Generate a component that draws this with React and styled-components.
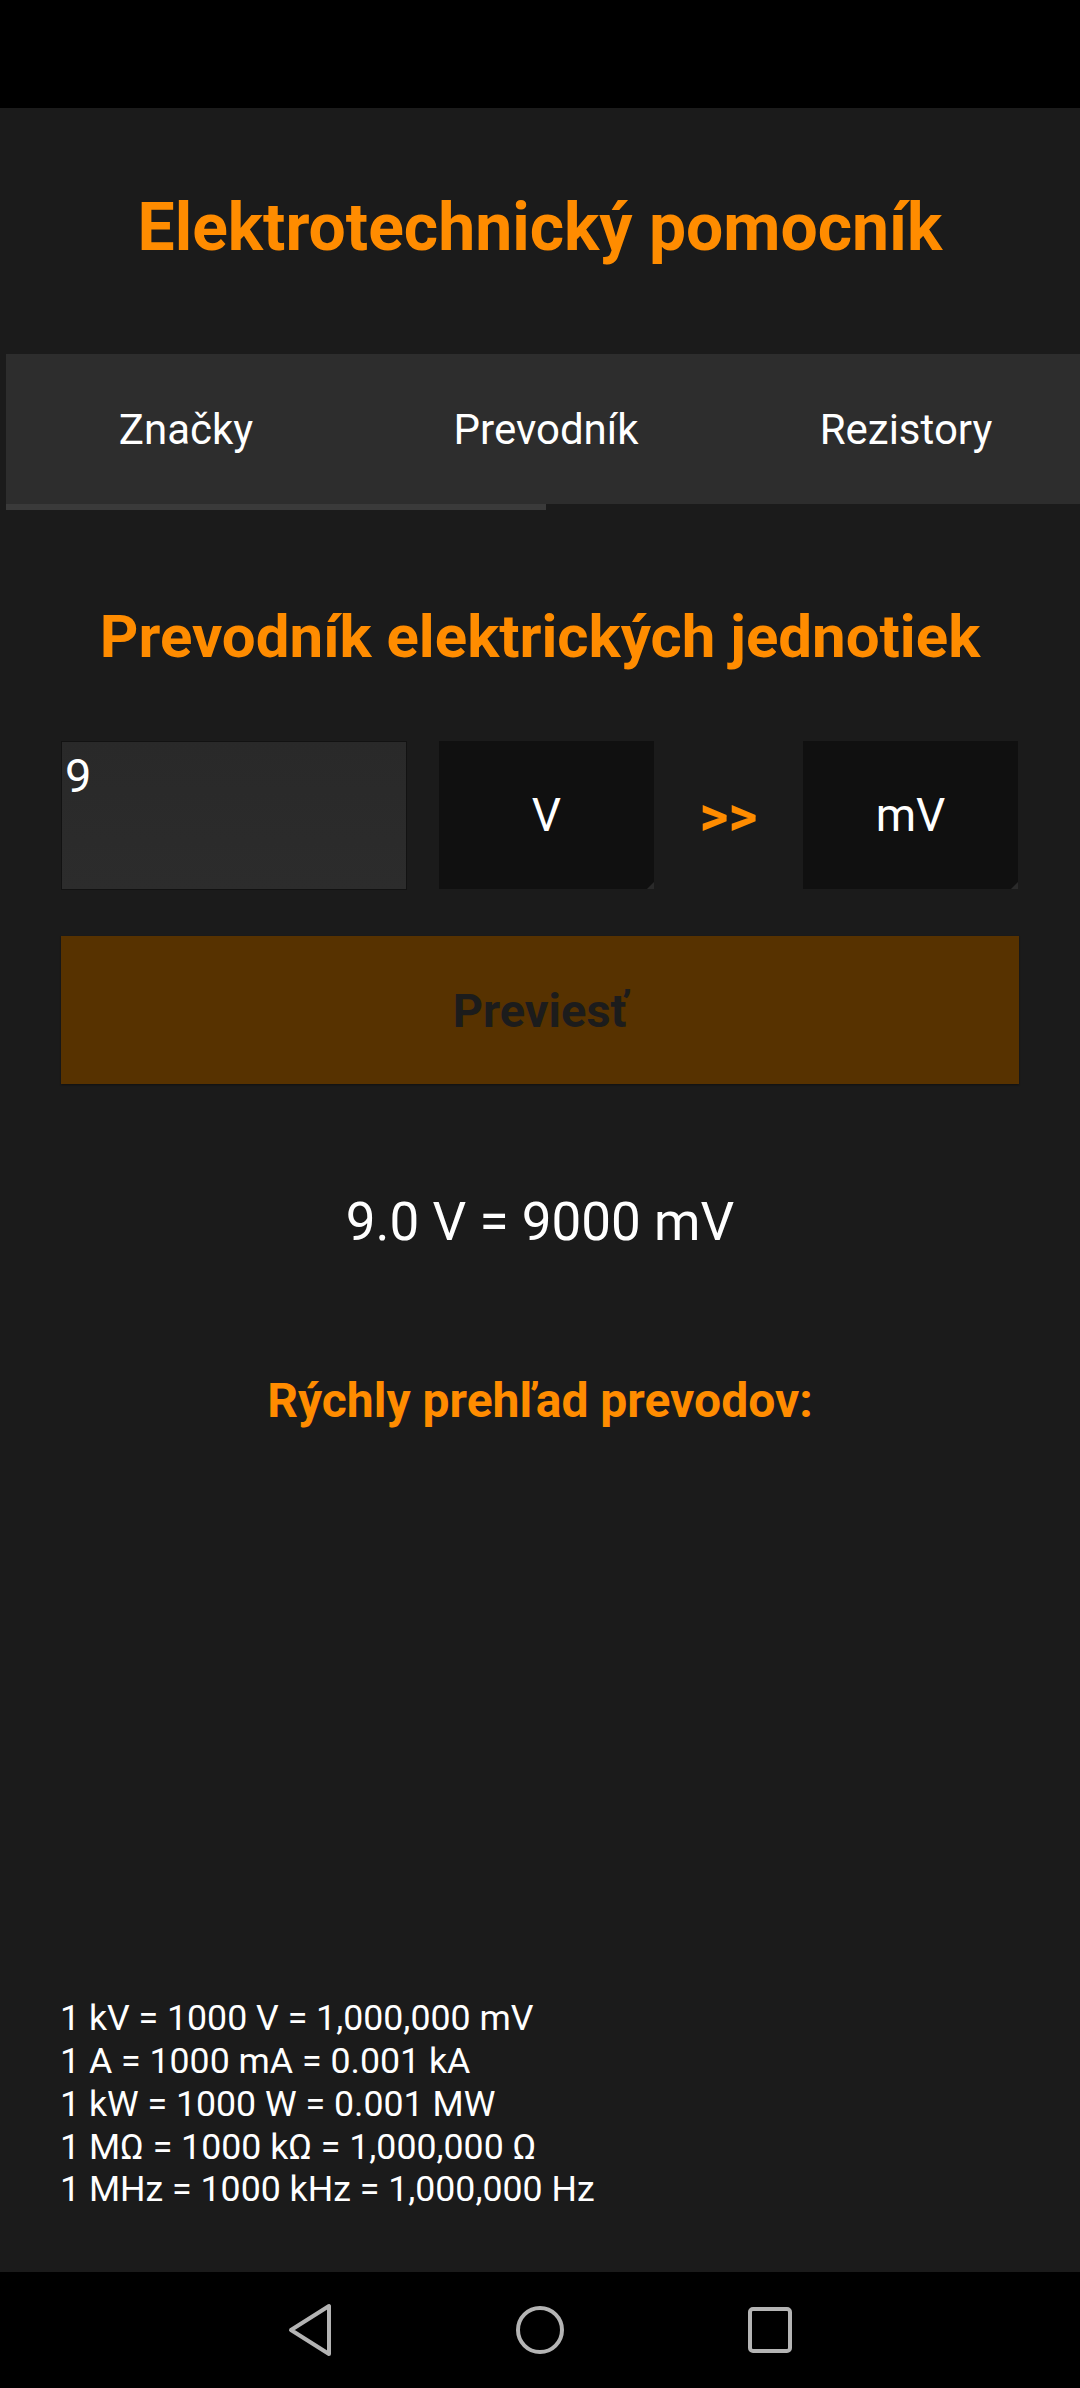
import React from "react";
import styled, { createGlobalStyle } from "styled-components";

const GlobalStyle = createGlobalStyle`
  html, body {
    margin: 0;
    padding: 0;
    background: #1b1b1b;
    overflow: hidden;
  }
  * { box-sizing: border-box; }
`;

const ORANGE = "#ff8c00";

const Screen = styled.div`
  width: 1080px;
  height: 2388px;
  display: flex;
  flex-direction: column;
  background: #1b1b1b;
  font-family: Roboto, "Noto Sans", sans-serif;
  overflow: hidden;
`;

const StatusBar = styled.div`
  height: 108px;
  flex: none;
  background: #000;
`;

const Main = styled.main`
  flex: 1;
  display: flex;
  flex-direction: column;
  min-height: 0;
`;

const AppTitle = styled.h1`
  margin: 80px 0 0;
  font-size: 66px;
  line-height: 80px;
  font-weight: 700;
  color: ${ORANGE};
  text-align: center;
`;

const TabStrip = styled.nav`
  margin: 86px 0 0 6px;
  width: 1080px;
  flex: none;
`;

const TabRow = styled.div`
  display: flex;
  height: 150px;
  background: #2d2d2d;
`;

const Tab = styled.div`
  width: 360px;
  flex: none;
  display: flex;
  align-items: center;
  justify-content: center;
  font-size: 42px;
  color: #fff;
`;

const Indicator = styled.div`
  width: 540px;
  height: 6px;
  background: #3a3a3a;
`;

const SectionTitle = styled.h2`
  margin: 93px 0 0;
  font-size: 60px;
  line-height: 68px;
  font-weight: 700;
  color: ${ORANGE};
  text-align: center;
`;

const ConvertRow = styled.div`
  display: flex;
  align-items: stretch;
  margin: 70px 61px 0;
  height: 149px;
`;

const ValueInput = styled.textarea`
  width: 346px;
  height: 149px;
  flex: none;
  margin: 0 32px 0 0;
  padding: 6px 3px;
  background: linear-gradient(#292929, #2c2c2c);
  border: 1px solid #121212;
  border-radius: 0;
  color: #fff;
  font-family: Roboto, "Noto Sans", sans-serif;
  font-size: 47px;
  line-height: 55px;
  resize: none;
  outline: none;
`;

const UnitBox = styled.div`
  position: relative;
  width: 215px;
  height: 148px;
  flex: none;
  display: flex;
  align-items: center;
  justify-content: center;
  background: #101010;
  color: #fff;
  font-size: 46px;

  &::after {
    content: "";
    position: absolute;
    right: 0;
    bottom: 0;
    width: 0;
    height: 0;
    border-style: solid;
    border-width: 0 0 7px 7px;
    border-color: transparent transparent #2a2a2a transparent;
  }
`;

const Arrow = styled.div`
  width: 149px;
  flex: none;
  display: flex;
  align-items: center;
  justify-content: center;
  color: ${ORANGE};
  font-size: 56px;
  font-weight: 700;
  letter-spacing: 0;
`;

const ConvertButton = styled.button`
  margin: 46px 61px 0;
  height: 148px;
  flex: none;
  border: none;
  border-radius: 0;
  background: #573200;
  color: #1c1c1c;
  font-family: Roboto, "Noto Sans", sans-serif;
  font-size: 47px;
  font-weight: 700;
  box-shadow: 0 1px 2px rgba(0, 0, 0, 0.4);
  cursor: pointer;
`;

const Result = styled.div`
  margin-top: 107px;
  font-size: 53px;
  line-height: 62px;
  color: #fff;
  text-align: center;
`;

const QuickTitle = styled.h3`
  margin: 120px 0 0;
  font-size: 48px;
  line-height: 56px;
  font-weight: 700;
  color: ${ORANGE};
  text-align: center;
`;

const QuickList = styled.div`
  margin-top: auto;
  padding: 0 60px 61px;
  font-size: 35.7px;
  line-height: 42.7px;
  color: #fff;
`;

const QuickLine = styled.div``;

const NavBar = styled.div`
  height: 116px;
  flex: none;
  background: #000;
  display: flex;
  align-items: center;
  justify-content: center;
  gap: 182px;
`;

const NavIcon = styled.svg`
  width: 48px;
  height: 56px;
  flex: none;
  fill: none;
  stroke: #b4b4b4;
  stroke-width: 4;
  stroke-linejoin: round;
`;

const conversions = [
  "1 kV = 1000 V = 1,000,000 mV",
  "1 A = 1000 mA = 0.001 kA",
  "1 kW = 1000 W = 0.001 MW",
  "1 MΩ = 1000 kΩ = 1,000,000 Ω",
  "1 MHz = 1000 kHz = 1,000,000 Hz",
];

export default function App() {
  return (
    <>
      <GlobalStyle />
      <Screen>
        <StatusBar />
        <Main>
          <AppTitle>Elektrotechnický pomocník</AppTitle>
          <TabStrip>
            <TabRow>
              <Tab>Značky</Tab>
              <Tab>Prevodník</Tab>
              <Tab>Rezistory</Tab>
            </TabRow>
            <Indicator />
          </TabStrip>
          <SectionTitle>Prevodník elektrických jednotiek</SectionTitle>
          <ConvertRow>
            <ValueInput defaultValue="9" />
            <UnitBox>V</UnitBox>
            <Arrow>&gt;&gt;</Arrow>
            <UnitBox>mV</UnitBox>
          </ConvertRow>
          <ConvertButton>Previesť</ConvertButton>
          <Result>9.0 V = 9000 mV</Result>
          <QuickTitle>Rýchly prehľad prevodov:</QuickTitle>
          <QuickList>
            {conversions.map((c) => (
              <QuickLine key={c}>{c}</QuickLine>
            ))}
          </QuickList>
        </Main>
        <NavBar>
          <NavIcon viewBox="0 0 48 56">
            <polygon points="43,4 43,52 5,28" />
          </NavIcon>
          <NavIcon viewBox="0 0 48 56">
            <circle cx="24" cy="28" r="22" />
          </NavIcon>
          <NavIcon viewBox="0 0 48 56">
            <rect x="4" y="7" width="40" height="42" rx="3" />
          </NavIcon>
        </NavBar>
      </Screen>
    </>
  );
}
